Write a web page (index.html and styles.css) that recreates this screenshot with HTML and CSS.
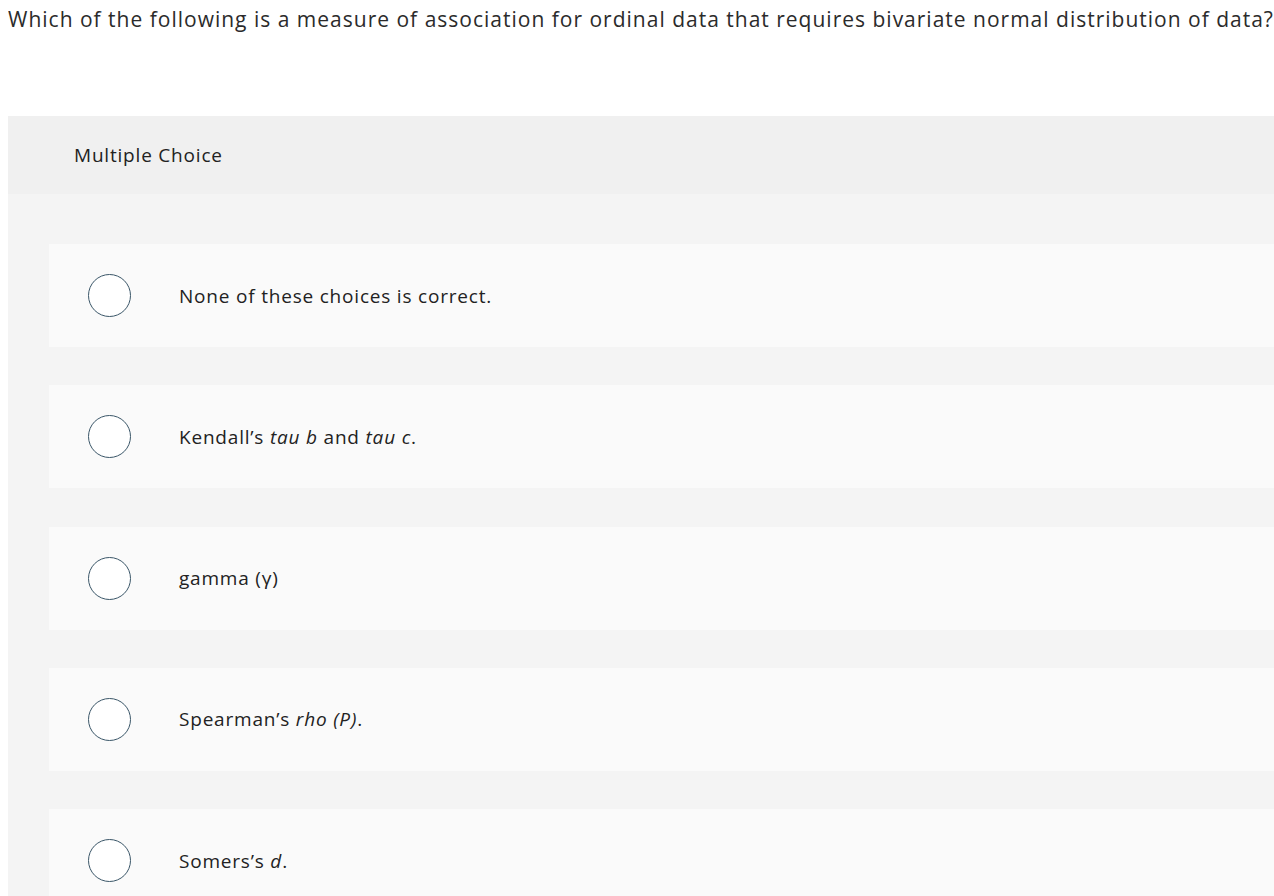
FILE: index.html
```html
<!DOCTYPE html>
<html lang="en">
<head>
<meta charset="utf-8">
<title>Multiple Choice</title>
<link rel="stylesheet" href="styles.css">
</head>
<body>
<p class="question">Which of the following is a measure of association for ordinal data that requires bivariate normal distribution of data?</p>
<div class="panel">
  <div class="panel-header">Multiple Choice</div>
  <div class="choices">
    <label class="choice"><span class="radio"></span><span class="choice-text">None of these choices is correct.</span></label>
    <label class="choice"><span class="radio"></span><span class="choice-text">Kendall’s <i>tau b</i> and <i>tau c</i>.</span></label>
    <label class="choice"><span class="radio"></span><span class="choice-text">gamma (γ)</span></label>
    <label class="choice"><span class="radio"></span><span class="choice-text">Spearman’s <i>rho (P)</i>.</span></label>
    <label class="choice"><span class="radio"></span><span class="choice-text">Somers’s <i>d</i>.</span></label>
  </div>
</div>
</body>
</html>
```
FILE: styles.css
```css
html, body {
  overflow: hidden;
}
body {
  margin: 0 0 0 8px;
  font-family: "Open Sans", "Liberation Sans", sans-serif;
  color: #222;
  background: #fff;
}
.question {
  margin: 0;
  padding-top: 5px;
  height: 111px;
  font-size: 21px;
  letter-spacing: 1px;
  line-height: 28px;
  white-space: nowrap;
  color: #2b2b2b;
}
.panel {
  width: 1300px;
  background: #f4f4f4;
}
.panel-header {
  height: 78px;
  box-sizing: border-box;
  padding: 26px 0 0 66px;
  background: #f0f0f0;
  font-size: 19px;
  letter-spacing: 0.8px;
  line-height: 26px;
}
.choices {
  display: flex;
  flex-direction: column;
  gap: 38.25px;
  padding: 50px 0 40px 41px;
}
.choice {
  display: flex;
  align-items: center;
  height: 103px;
  padding-left: 39px;
  background: #fafafa;
}
.radio {
  flex: none;
  width: 41px;
  height: 41px;
  border: 1px solid #3a5668;
  border-radius: 50%;
  background: #fff;
  margin-right: 48px;
}
.choice-text {
  font-size: 19px;
  letter-spacing: 0.8px;
  line-height: 26px;
  color: #222;
}
```
